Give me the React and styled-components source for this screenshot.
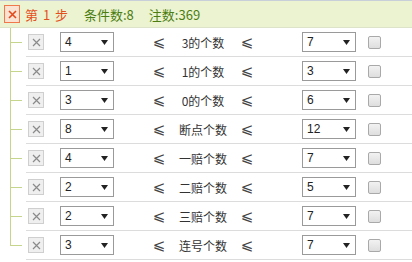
import React from 'react';
import styled, { createGlobalStyle } from 'styled-components';

const GlobalStyle = createGlobalStyle`
  body {
    margin: 0;
    background: #fff;
    font-family: 'Noto Sans CJK SC', 'DejaVu Sans', sans-serif;
    font-size: 12px;
    color: #333;
  }
`;

const Panel = styled.div`
  width: 412px;
`;

const Header = styled.div`
  height: 26px;
  display: flex;
  align-items: center;
  padding-left: 4px;
  background: #ebf3d1;
  border-top: 1px solid #c9cfd9;
  border-bottom: 1px solid #dde3c8;
  font-size: 13px;
`;

const DelStep = styled.div`
  width: 14px;
  height: 16px;
  border: 1px solid #f0784a;
  background: #fbe3d3;
  display: flex;
  align-items: center;
  justify-content: center;
  margin-right: 5px;
`;

const StepTitle = styled.span`
  color: #e4501c;
  width: 59px;
  letter-spacing: 1px;
`;

const Stat = styled.span`
  color: #4b7d12;
  margin-right: 15px;
`;

const List = styled.div``;

const Row = styled.div`
  display: flex;
  height: 29px;
`;

const Branch = styled.div`
  position: relative;
  width: 26px;
  flex: none;
  &::before {
    content: '';
    position: absolute;
    left: 10px;
    top: 0;
    width: 1px;
    height: ${(p) => (p.$last ? '15px' : '100%')};
    background: #c6d58c;
  }
  &::after {
    content: '';
    position: absolute;
    left: 10px;
    top: 14px;
    width: 12px;
    height: 1px;
    background: #c6d58c;
  }
`;

const Cells = styled.div`
  flex: 1;
  display: flex;
  align-items: center;
  border-bottom: 1px solid #dcdcdc;
`;

const DelRow = styled.div`
  width: 14px;
  height: 14px;
  margin: 0 16px 0 2px;
  border: 1px solid #cfcfcf;
  background: #efefef;
  display: flex;
  align-items: center;
  justify-content: center;
`;

const Select = styled.div`
  height: 18px;
  width: 43px;
  border: 1px solid #9a9a9a;
  background: #fff;
  display: flex;
  align-items: center;
  justify-content: space-between;
  padding: 0 5px 0 4px;
  font-family: 'Liberation Sans', sans-serif;
  font-size: 12px;
  color: #222;
`;

const Cmp = styled.span`
  width: 30px;
  text-align: center;
  margin-left: ${(p) => p.$ml || 0}px;
  font-family: 'DejaVu Sans', sans-serif;
  font-size: 15px;
  line-height: 18px;
  color: #444;
`;

const Label = styled.span`
  width: 58px;
  text-align: center;
  white-space: nowrap;
  color: #333;
`;

const Spacer = styled.div`
  width: 40px;
`;

const Check = styled.div`
  width: 11px;
  height: 11px;
  margin-left: 12px;
  border: 1px solid #a9a9a9;
  border-radius: 2px;
  background: linear-gradient(#f2f2f2, #dedede);
`;

const Cross = ({ color, w }) => (
  <svg width="9" height="9" viewBox="0 0 9 9">
    <path d="M1 1L8 8M8 1L1 8" stroke={color} strokeWidth={w} />
  </svg>
);

const Arrow = () => (
  <svg width="7" height="7" viewBox="0 0 7 7">
    <path d="M0 1H7L3.5 6Z" fill="#222" />
  </svg>
);

const rows = [
  { min: '4', label: '3的个数', max: '7' },
  { min: '1', label: '1的个数', max: '3' },
  { min: '3', label: '0的个数', max: '6' },
  { min: '8', label: '断点个数', max: '12' },
  { min: '4', label: '一赔个数', max: '7' },
  { min: '2', label: '二赔个数', max: '5' },
  { min: '2', label: '三赔个数', max: '7' },
  { min: '3', label: '连号个数', max: '7' },
];

const App = () => (
  <Panel>
    <GlobalStyle />
    <Header>
      <DelStep>
        <Cross color="#e2481a" w={1.6} />
      </DelStep>
      <StepTitle>第 1 步</StepTitle>
      <Stat>条件数:8</Stat>
      <Stat>注数:369</Stat>
    </Header>
    <List>
      {rows.map((r, i) => (
        <Row key={i}>
          <Branch $last={i === rows.length - 1} />
          <Cells>
            <DelRow>
              <Cross color="#8a8a8a" w={1.2} />
            </DelRow>
            <Select>
              <span>{r.min}</span>
              <Arrow />
            </Select>
            <Cmp $ml={30}>⩽</Cmp>
            <Label>{r.label}</Label>
            <Cmp>⩽</Cmp>
            <Spacer />
            <Select>
              <span>{r.max}</span>
              <Arrow />
            </Select>
            <Check />
          </Cells>
        </Row>
      ))}
    </List>
  </Panel>
);

export default App;
